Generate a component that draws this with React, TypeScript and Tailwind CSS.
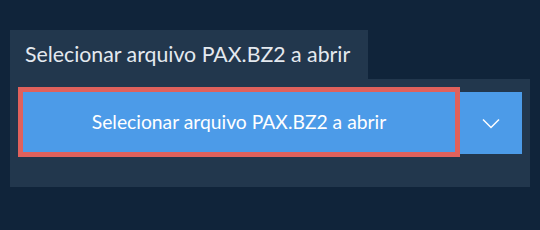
export default function App() {
  return (
    <div
      className="w-[540px] h-[230px] bg-[#10243a] pt-[30px] pl-[10px]"
      style={{ fontFamily: "Lato, 'Noto Sans', sans-serif" }}
    >
      <div className="w-[358px] h-[49px] bg-[#22374d] pl-[15px] flex items-center">
        <span className="text-[21.3px] text-[#e4e9ef] leading-none">Selecionar arquivo PAX.BZ2 a abrir</span>
      </div>
      <div className="w-[520px] h-[108px] bg-[#22374d] pt-[8px] pl-[8px]">
        <div className="flex items-start">
          <button className="w-[442px] h-[70px] border-[5px] border-[#e0615c] bg-[#4c9be8] text-white text-[19.3px] flex items-center justify-center">
            Selecionar arquivo PAX.BZ2 a abrir
          </button>
          <button className="mt-[5px] w-[62px] h-[62px] bg-[#4c9be8] flex items-center justify-center">
            <svg width="18" height="11" viewBox="0 0 18 11" fill="none">
              <path d="M1 1.5 L9 9.5 L17 1.5" stroke="white" strokeWidth="1.5" />
            </svg>
          </button>
        </div>
      </div>
    </div>
  );
}
